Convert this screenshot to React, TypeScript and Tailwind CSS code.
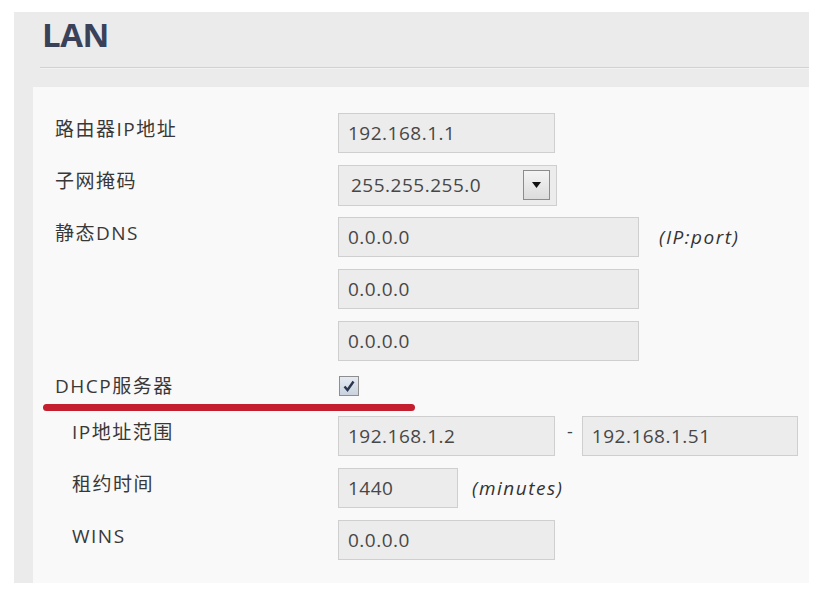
import type { ReactNode } from 'react';

const FONT = { fontFamily: '"Open Sans", "Noto Sans CJK SC", sans-serif' };

function Field({ value, width = 'w-[217px]' }: { value: string; width?: string }) {
  return (
    <div
      className={`${width} h-[40px] flex items-center pl-[9px] bg-[#ececec] border border-[#cfcfcf] text-[19px] tracking-[0.5px] text-[#474747]`}
    >
      {value}
    </div>
  );
}

function Row({ label, indent, children }: { label: string; indent?: boolean; children: ReactNode }) {
  return (
    <div className="flex items-center h-[40px]">
      <div
        className={`${indent ? 'pl-[17px]' : ''} w-[283px] text-[19px] tracking-[1.5px] text-[#383838] -mt-[7px]`}
      >
        {label}
      </div>
      {children}
    </div>
  );
}

export default function App() {
  return (
    <div className="min-h-[599px] bg-white pt-[12px] pl-[14px]" style={FONT}>
      <div className="w-[795px] h-[571px] bg-[#ebebeb] flex flex-col">
        <div className="h-[75px] flex flex-col">
          <h1 className="pl-[28px] pt-[6px] text-[33px] leading-[33px] font-bold tracking-[-0.5px] text-[#3a4259]">LAN</h1>
          <div className="ml-[26px] mt-[16px] h-[2px] bg-[#d2d2d2] border-b border-[#f2f2f2]" />
        </div>
        <div className="ml-[19px] flex-1 bg-[#f9f9f9] pt-[26px] pl-[22px]">
          <div className="flex flex-col gap-[12px]">
            <Row label="路由器IP地址">
              <Field value="192.168.1.1" />
            </Row>
            <Row label="子网掩码">
              <div className="w-[219px] h-[41px] flex items-center justify-between pl-[12px] pr-[6px] bg-[#ececec] border border-[#cfcfcf] text-[19px] tracking-[0.5px] text-[#474747]">
                <span>255.255.255.0</span>
                <span className="w-[27px] h-[30px] flex items-center justify-center border border-[#8c8c8c] bg-gradient-to-b from-[#f4f4f4] to-[#dcdcdc]">
                  <svg width="9" height="6" viewBox="0 0 9 6">
                    <path d="M0 0 L9 0 L4.5 6 Z" fill="#111" />
                  </svg>
                </span>
              </div>
            </Row>
            <Row label="静态DNS">
              <Field value="0.0.0.0" width="w-[301px]" />
              <span className="ml-[20px] italic text-[19px] tracking-[1.5px] text-[#333]">(IP:port)</span>
            </Row>
            <Row label="">
              <Field value="0.0.0.0" width="w-[301px]" />
            </Row>
            <Row label="">
              <Field value="0.0.0.0" width="w-[301px]" />
            </Row>
            <div className="relative flex items-start h-[31px]">
              <div className="w-[283px] -mt-[1px] text-[19px] tracking-[1.5px] text-[#383838]">DHCP服务器</div>
              <span className="mt-[3px] ml-[1px] w-[20px] h-[20px] flex items-center justify-center border border-[#8e8e8e] bg-gradient-to-b from-[#e6ebf2] to-[#c9d2de]">
                <svg width="12" height="12" viewBox="0 0 12 12">
                  <path d="M1.5 6.5 L4.5 10 L10.5 1.5" fill="none" stroke="#2a3550" strokeWidth="2.4" />
                </svg>
              </span>
              <div className="absolute left-[-12px] top-[31px] w-[372px] h-[7px] rounded-full bg-[#c41f2e]" />
            </div>
            <Row label="IP地址范围" indent>
              <Field value="192.168.1.2" />
              <span className="ml-[12px] -mt-[10px] text-[18px] text-[#444]">-</span>
              <div className="ml-[9px]">
                <Field value="192.168.1.51" width="w-[216px]" />
              </div>
            </Row>
            <Row label="租约时间" indent>
              <Field value="1440" width="w-[120px]" />
              <span className="ml-[14px] italic text-[19px] tracking-[1.5px] text-[#333]">(minutes)</span>
            </Row>
            <Row label="WINS" indent>
              <Field value="0.0.0.0" />
            </Row>
          </div>
        </div>
      </div>
    </div>
  );
}
